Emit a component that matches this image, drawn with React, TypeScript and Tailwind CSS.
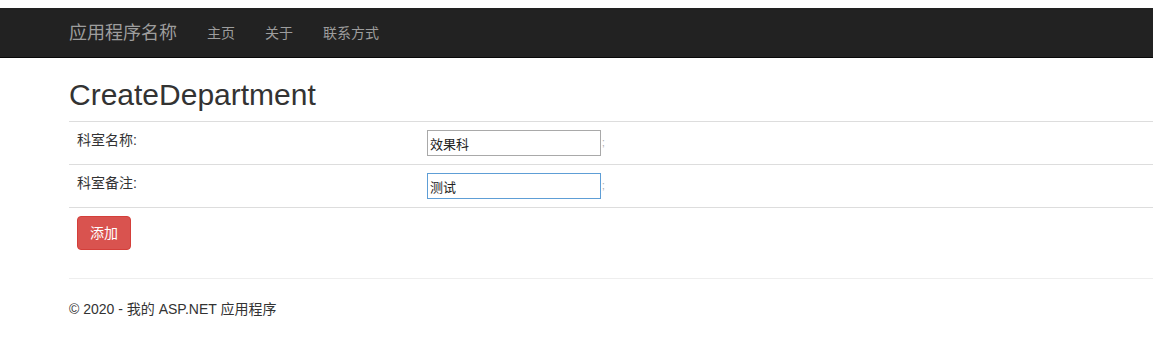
const font = { fontFamily: '"Liberation Sans", Arial, "Noto Sans CJK SC", sans-serif' }

const rows = [
    { label: '科室名称:', value: '效果科', focused: false },
    { label: '科室备注:', value: '测试', focused: true },
]

export default function App() {
    return (
        <div className="w-[1153px] h-[346px] overflow-hidden bg-white text-[14px] leading-[20px] text-[#333]" style={font}>
            <div className="h-[8px]" />
            <nav className="h-[50px] bg-[#222222] border-b border-[#080808]">
                <div className="ml-[54px] w-[1170px] px-[15px] flex items-center h-full">
                    <span className="text-[18px] leading-[20px] text-[#9d9d9d] pr-[15px]">应用程序名称</span>
                    <a className="px-[15px] text-[#9d9d9d]">主页</a>
                    <a className="px-[15px] text-[#9d9d9d]">关于</a>
                    <a className="px-[15px] text-[#9d9d9d]">联系方式</a>
                </div>
            </nav>

            <div className="ml-[54px] w-[1170px] px-[15px]">
                <h2 className="mt-[20px] mb-[10px] text-[30px] leading-[33px] text-[#333]">CreateDepartment</h2>

                <table className="w-full border-collapse mb-[20px]">
                    <tbody>
                        {rows.map((row) => (
                            <tr key={row.label}>
                                <td className="w-[350px] p-[8px] border-t border-[#dddddd] align-top">{row.label}</td>
                                <td className="p-[8px] border-t border-[#dddddd] align-top">
                                    <div className="flex items-center">
                                        <input
                                            readOnly
                                            value={row.value}
                                            className={`w-[174px] h-[26px] px-[2px] text-[13px] text-[#222] bg-white border outline-none ${row.focused ? 'border-[#5e9ed6]' : 'border-[#a9a9a9]'}`}
                                            style={font}
                                        />
                                        <span className="text-[10px] leading-[14px] text-[#aaaaaa] ml-[1px]">;</span>
                                    </div>
                                </td>
                            </tr>
                        ))}
                        <tr>
                            <td className="p-[8px] border-t border-[#dddddd]" colSpan={2}>
                                <button className="h-[34px] px-[12px] bg-[#d9534f] border border-[#d43f3a] rounded-[4px] text-white text-[14px]">
                                    添加
                                </button>
                            </td>
                        </tr>
                    </tbody>
                </table>

                <hr className="border-0 border-t border-[#eeeeee] mb-[20px]" />
                <footer>
                    <p>© 2020 - 我的 ASP.NET 应用程序</p>
                </footer>
            </div>
        </div>
    )
}
